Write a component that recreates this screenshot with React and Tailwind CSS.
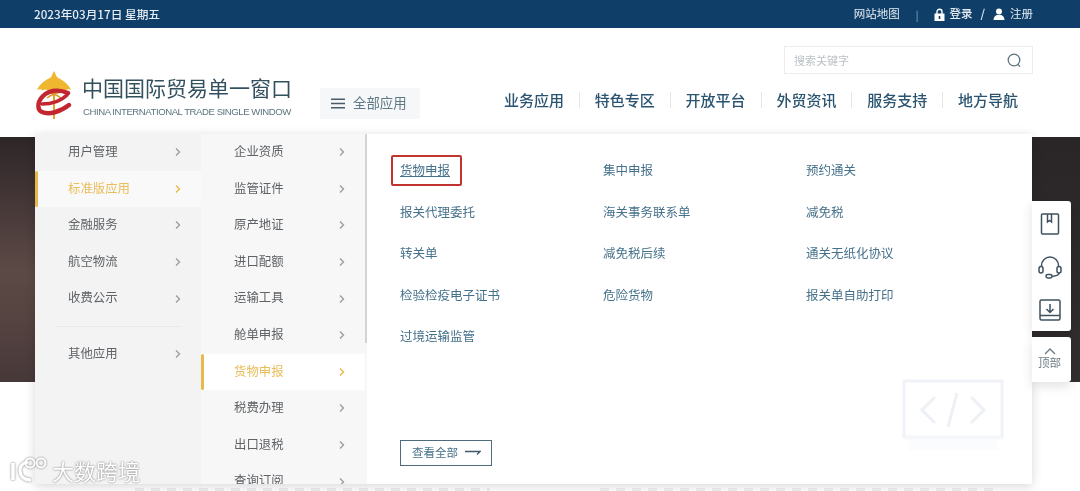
import React from "react";

const col1 = ["用户管理", "标准版应用", "金融服务", "航空物流", "收费公示"];
const col2 = ["企业资质", "监管证件", "原产地证", "进口配额", "运输工具", "舱单申报", "货物申报", "税费办理", "出口退税", "查询订阅"];
const links = [
  "货物申报", "集中申报", "预约通关",
  "报关代理委托", "海关事务联系单", "减免税",
  "转关单", "减免税后续", "通关无纸化协议",
  "检验检疫电子证书", "危险货物", "报关单自助打印",
  "过境运输监管",
];
const nav = ["业务应用", "特色专区", "开放平台", "外贸资讯", "服务支持", "地方导航"];

function Chevron({ active }) {
  return (
    <svg width="8" height="10" viewBox="0 0 8 10" fill="none" stroke={active ? "#e9b84a" : "#9a9fa2"} strokeWidth="1.4">
      <path d="M2 1.5l3.5 3.5L2 8.5" />
    </svg>
  );
}

function Row({ label, active, textX, chevX, activeBg }) {
  return (
    <div className={`relative flex h-[36.6px] items-center ${active ? activeBg : ""}`}>
      {active && <span className="absolute left-0 top-0 h-full w-[3px] rounded-sm bg-[#e9b84a]" />}
      <span className={`absolute -translate-y-[0.6px] text-[12.4px] ${textX} ${active ? "text-[#e8bd5a]" : "text-[#5f6367]"}`}>{label}</span>
      <span className={`absolute flex ${chevX}`}><Chevron active={active} /></span>
    </div>
  );
}

function Logo() {
  return (
    <svg width="36" height="50" viewBox="0 0 36 50" className="shrink-0">
      <path d="M18 1c1.5 2.5 2 5 3.5 6.5C26 10 32 13 35 20c-2-1-4-1-6 .5-1.500-1.500-3.500-1.500-5 .5-1.500-1.500-3-2-4-1l-2 3-2-3c-1-1-2.500-.5-4 1-1.500-2-3.500-2-5-.5C5 19 3 19 1 20c3-7 9-10 13.500-12.500C16 6 16.500 3.500 18 1z" fill="#efb62f" />
      <path d="M18 20v29" stroke="#e2a32b" strokeWidth="2" />
      <path d="M11 22c5 1 10 3 14 6M25 22c-5 1-10 3-14 6" stroke="#dc9a2a" strokeWidth="1.5" fill="none" />
      <path d="M32 23c-9-4-19-3-25 3-6 6-6 14-1 16 7 3 18 0 27-7" fill="none" stroke="#c3262f" strokeWidth="4.400" strokeLinecap="round" />
      <path d="M6 34c9 0 19-3 25-9" fill="none" stroke="#c3262f" strokeWidth="3.600" strokeLinecap="round" />
    </svg>
  );
}

function Sidebar() {
  const s = "#3f525e";
  return (
    <div className="absolute left-[1032px] top-[201px] flex w-[39px] flex-col gap-[6px]">
      <div className="flex h-[130px] flex-col items-center gap-[20.5px] rounded-r-[3px] bg-white pr-[4px] pt-[12px] shadow-[0_4px_12px_rgba(0,0,0,0.12)]">
        <svg width="20" height="22" viewBox="0 0 20 22" fill="none" stroke={s} strokeWidth="1.5">
          <rect x="1.5" y="1" width="17" height="20" rx="1" />
          <path d="M7.5 1v8l2-1.5 2 1.5V1" />
        </svg>
        <svg width="24" height="23" viewBox="0 0 24 23" fill="none" stroke={s} strokeWidth="1.5">
          <path d="M3.5 11V9.5a8.5 8.5 0 0 1 17 0V11" />
          <rect x="1" y="10.5" width="4" height="6.5" rx="2" />
          <rect x="19" y="10.5" width="4" height="6.5" rx="2" />
          <path d="M21 17c0 2-3 3-7 3.5" />
          <rect x="8" y="18.5" width="6" height="3.5" rx="1.7" />
        </svg>
        <svg width="22" height="22" viewBox="0 0 22 22" fill="none" stroke={s} strokeWidth="1.5">
          <rect x="1" y="1" width="20" height="20" rx="1.5" />
          <path d="M1 16.5h20M11 5v8M7.5 10l3.5 3.5 3.5-3.5" />
        </svg>
      </div>
      <div className="flex h-[45px] flex-col items-center rounded-r-[3px] bg-white pr-[4px] pt-[11px] shadow-[0_4px_12px_rgba(0,0,0,0.12)]">
        <svg width="12" height="7" viewBox="0 0 12 7" fill="none" stroke="#6d7b84" strokeWidth="1.4"><path d="M1 6l5-5 5 5" /></svg>
        <span className="text-[11.5px] leading-[15px] text-[#6d7b84]">顶部</span>
      </div>
    </div>
  );
}

export default function App() {
  return (
    <div className="relative h-[491px] w-[1080px] overflow-hidden bg-white blur-[0.5px] font-['Noto_Sans_CJK_SC','Noto_Sans',sans-serif]">
      {/* top bar */}
      <div className="flex h-[28px] items-center justify-between bg-[#0f3e69] pl-[34px] pr-[47px] text-[11.5px] text-[#e6edf3]">
        <span className="text-[11.7px] font-medium">2023年03月17日 星期五</span>
        <div className="flex items-center">
          <span>网站地图</span>
          <span className="ml-[16px] mr-[15px] text-[10px] text-[#9fb3c6]">|</span>
          <svg width="11" height="13" viewBox="0 0 11 13" className="mr-[5px]">
            <path d="M3 6V3.8a2.5 2.5 0 0 1 5 0V6" fill="none" stroke="#fff" strokeWidth="1.4" />
            <path d="M0.5 5.5h10V13h-10z" fill="#fff" />
            <rect x="4.7" y="8" width="1.6" height="3" fill="#0f3e69" />
          </svg>
          <span className="font-medium">登录</span>
          <span className="mx-[8px] font-medium">/</span>
          <svg width="12" height="12" viewBox="0 0 12 12" className="mr-[5px]" fill="#fff">
            <circle cx="6" cy="3.4" r="3" />
            <path d="M0.5 12c0-3 2-4.5 3.5-5h4c1.5.5 3.5 2 3.5 5z" />
          </svg>
          <span>注册</span>
        </div>
      </div>

      {/* header */}
      <header className="flex h-[109px] pl-[36px] pr-[47px]">
        <div className="mt-[42px] flex">
          <Logo />
          <div className="ml-[10px] mt-[3px] flex flex-col">
            <span className="text-[21px] leading-[28px] text-[#33505f]">中国国际贸易单一窗口</span>
            <span className="mt-[5px] w-[207px] whitespace-nowrap pl-[1px] font-['Liberation_Sans',sans-serif] text-[9.6px] leading-[12px] tracking-[-0.45px] text-[#5c7480]">CHINA INTERNATIONAL TRADE SINGLE WINDOW</span>
          </div>
        </div>
        <div className="ml-[28px] mt-[60px] flex h-[31px] w-[100px] items-center gap-[8px] bg-[#f6f7f8] pl-[11px] text-[13.4px] text-[#5f7884]">
          <svg width="14" height="11" viewBox="0 0 14 11" stroke="#4a5c68" strokeWidth="1.5"><path d="M0 1.2h14M0 5.5h14M0 9.8h14" /></svg>
          <span className="-translate-y-[1px]">全部应用</span>
        </div>
        <div className="ml-auto flex flex-col items-end">
          <div className="mt-[18px] flex h-[28px] w-[249px] items-center justify-between border border-[#ececec] pl-[9px] pr-[10px] text-[11px] text-[#bcc2c6]">
            <span className="-translate-y-[0.5px]">搜索关键字</span>
            <svg width="15" height="15" viewBox="0 0 15 15" fill="none" stroke="#5e7480" strokeWidth="1.3">
              <circle cx="7" cy="7" r="5.8" /><path d="M10.8 11.2l2.2 2.4" />
            </svg>
          </div>
          <nav className="mr-[15px] mt-[15px] flex items-center gap-[14.9px] text-[15px] font-medium leading-[22px] text-[#2a5470]">
            {nav.map((n, i) => (
              <React.Fragment key={n}>
                {i > 0 && <span className="h-[16px] w-px bg-[#e6e6e6]" />}
                <span>{n}</span>
              </React.Fragment>
            ))}
          </nav>
        </div>
      </header>

      {/* hero strips behind the menu */}
      <div className="flex h-[245px] justify-between">
        <div className="w-[35px] bg-[linear-gradient(180deg,#2d2627_0%,#443637_25%,#5c4a46_55%,#554341_75%,#473839_100%)]" />
        <div className="w-[48px] bg-[linear-gradient(180deg,#2a2628_0%,#332e30_100%)]" />
      </div>

      {/* illegible page text below the hero */}
      <div className="flex h-[109px] items-end pl-[135px]">
        <div className="h-[3px] w-[355px] bg-[repeating-linear-gradient(90deg,#eceef0_0_9px,transparent_9px_16px)]" />
        <div className="ml-[110px] h-[3px] w-[400px] bg-[repeating-linear-gradient(90deg,#eef0f2_0_9px,transparent_9px_16px)]" />
      </div>

      {/* mega menu */}
      <div className="absolute left-[35px] top-[134px] flex h-[350px] w-[997px] bg-white shadow-[0_2px_10px_rgba(0,0,0,0.16)]">
        <div className="w-[166px] shrink-0 bg-[#f3f3f3]">
          {col1.map((l, i) => (
            <Row key={l} label={l} active={i === 1} textX="left-[33px]" chevX="left-[139px]" activeBg="bg-[#f9f9f9]" />
          ))}
          <div className="mx-[20px] my-[9px] h-px bg-[#e8e8e8]" />
          <Row label="其他应用" textX="left-[33px]" chevX="left-[139px]" />
        </div>
        <div className="relative w-[166px] shrink-0 overflow-hidden bg-[#f7f7f7] pr-[2px]">
          {col2.map((l, i) => (
            <Row key={l} label={l} active={i === 6} textX="left-[33px]" chevX="left-[137px]" activeBg="bg-white" />
          ))}
          <span className="absolute right-0 top-0 h-[209px] w-[2px] bg-[#d4d4d4]" />
        </div>
        <div className="relative flex flex-1 flex-col pl-[33px] pt-[15.5px]">
          <div className="grid grid-cols-[203px_203px_203px] auto-rows-[41.6px] items-center text-[12.5px] text-[#45718b]">
            {links.map((l, i) => (
              <span key={l} className="relative w-fit">
                <span className={i === 0 ? "underline" : ""}>{l}</span>
                {i === 0 && <span className="absolute -left-[9px] -top-[6px] h-[31px] w-[71px] rounded-[2px] border-[2px] border-[#c0332f]" />}
              </span>
            ))}
          </div>
          <div className="mb-[18px] mt-auto flex h-[26px] w-[92px] items-center gap-[7px] border border-[#4f6c7e] pl-[11px] text-[11.5px] text-[#45718b]">
            查看全部
            <svg width="16" height="6" viewBox="0 0 16 6" fill="none" stroke="#3d5a6c" strokeWidth="1.3"><path d="M0 1.5h15l-3 3" /></svg>
          </div>
          <svg width="102" height="72" viewBox="0 0 102 72" className="absolute left-[535px] top-[245px]" fill="none">
            <rect x="2" y="2" width="98" height="56" stroke="#f0f2f7" strokeWidth="3" />
            <path d="M2 59h98" stroke="#f6f7fa" strokeWidth="3" />
            <path d="M6 61h90v10H6z" fill="#fbfcfd" />
            <path d="M33 18L20 31l13 13M69 18l13 13-13 13M55 14L46 48" stroke="#edf0f4" strokeWidth="3" />
          </svg>
        </div>
      </div>

      <Sidebar />

      {/* watermark */}
      <div className="absolute left-[10px] top-[457px] flex items-center gap-[4px]">
        <svg width="38" height="26" viewBox="0 0 38 26" fill="none" stroke="#fff" className="drop-shadow-[0_0_1px_#777]">
          <path d="M3 6v17" strokeWidth="3.6" />
          <path d="M18 5c-6 1-8 4-8 8 0 6 4 10 11 10" strokeWidth="3.2" />
          <circle cx="20" cy="6" r="4.6" strokeWidth="2" />
          <circle cx="31" cy="6" r="4.4" strokeWidth="2" />
        </svg>
        <span className="text-[22px] leading-[26px] text-white [text-shadow:0_0_2px_#666]">大数跨境</span>
      </div>
    </div>
  );
}
